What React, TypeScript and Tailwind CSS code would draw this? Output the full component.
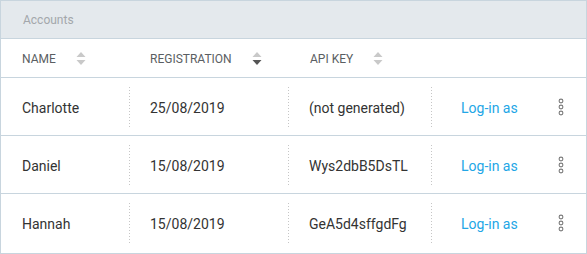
import { Fragment } from 'react';

type Sort = 'none' | 'desc';

const rows = [
  { name: 'Charlotte', date: '25/08/2019', key: '(not generated)' },
  { name: 'Daniel', date: '15/08/2019', key: 'Wys2dbB5DsTL' },
  { name: 'Hannah', date: '15/08/2019', key: 'GeA5d4sffgdFg' },
];

const SortIcon = ({ state }: { state: Sort }) => (
  <svg width="10" height="14" viewBox="0 0 10 14" className="ml-5 shrink-0">
    <path d="M5 0 L9.5 5 H0.5 Z" fill="#c9c9c9" />
    <path d="M0.5 8 H9.5 L5 13 Z" fill={state === 'desc' ? '#555555' : '#c9c9c9'} />
  </svg>
);

const Kebab = () => (
  <svg width="8" height="18" viewBox="0 0 8 18">
    <circle cx="4" cy="3" r="1.9" fill="none" stroke="#7a7a7a" strokeWidth="1.1" />
    <circle cx="4" cy="9" r="1.9" fill="none" stroke="#7a7a7a" strokeWidth="1.1" />
    <circle cx="4" cy="15" r="1.9" fill="none" stroke="#7a7a7a" strokeWidth="1.1" />
  </svg>
);

const Cell = ({ children, divider, className = '' }: { children: React.ReactNode; divider?: boolean; className?: string }) => (
  <div className={`relative flex items-center ${className}`}>
    {divider && (
      <div className="absolute left-0 top-[9px] bottom-[8px] w-px bg-[linear-gradient(#c6c6c6_34%,transparent_0)] bg-[length:1px_3px]" />
    )}
    {children}
  </div>
);

const App = () => {
  return (
    <div className="w-[587px] h-[254px] bg-white font-['Roboto',sans-serif]">
      <div className="border border-[#c8d5de] h-[254px] flex flex-col">
        {/* title band */}
        <div className="h-[38px] bg-[#e4e9ed] border-b border-[#c8d5de] flex items-center pl-[22px] text-[12px] text-[#a3a7ab]">
          Accounts
        </div>

        <div className="grid grid-cols-[128px_159px_143px_1fr]">
          {/* header row */}
          <div className="h-[39px] flex items-center pl-[21px] pt-px text-[12px] text-[#5a5e62] border-b border-[#c8d5de]">
            NAME <SortIcon state="none" />
          </div>
          <div className="h-[39px] flex items-center pl-[21px] pt-px text-[12px] text-[#5a5e62] border-b border-[#c8d5de]">
            REGISTRATION <SortIcon state="desc" />
          </div>
          <div className="h-[39px] flex items-center pl-[22px] pt-px text-[12px] text-[#5a5e62] border-b border-[#c8d5de]">
            API KEY <SortIcon state="none" />
          </div>
          <div className="h-[39px] border-b border-[#c8d5de]" />

          {rows.map((r, i) => {
            const last = i === rows.length - 1;
            const rowCls = `h-[58px] text-[14px] text-[#333] ${last ? '' : 'border-b border-[#c8d5de]'}`;
            return (
              <Fragment key={r.name}>
                <Cell className={`${rowCls} pl-[21px] pt-[3px]`}>{r.name}</Cell>
                <Cell divider className={`${rowCls} pl-[21px] pt-[3px]`}>{r.date}</Cell>
                <Cell divider className={`${rowCls} pl-[21px] pt-[3px]`}>{r.key}</Cell>
                <Cell divider className={`${rowCls} pl-[30px] pr-[21px] justify-between`}>
                  <span className="text-[#23a6e6] pt-[3px]">Log-in as</span>
                  <Kebab />
                </Cell>
              </Fragment>
            );
          })}
        </div>
      </div>
    </div>
  );
};

export default App;
